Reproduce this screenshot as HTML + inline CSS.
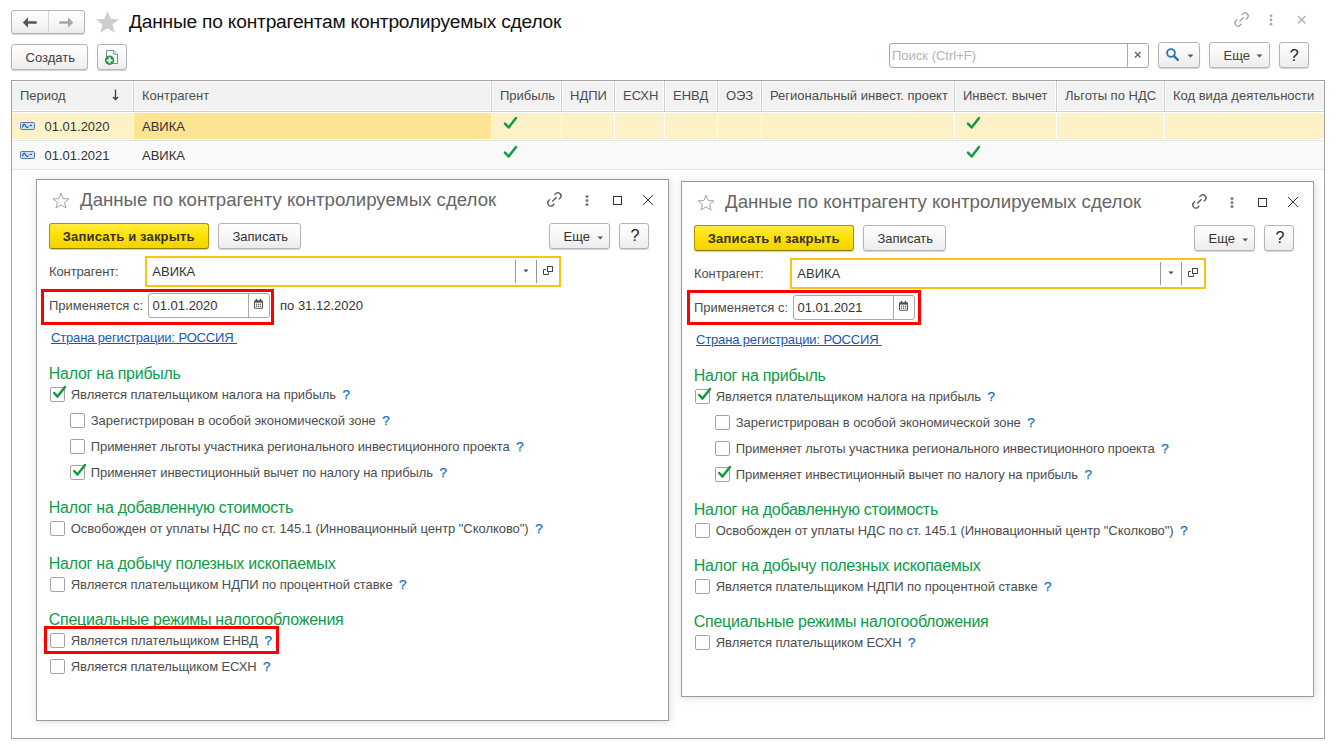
<!DOCTYPE html>
<html><head><meta charset="utf-8"><style>
html,body{margin:0;padding:0;background:#fff;width:1337px;height:750px;overflow:hidden;position:relative;font-family:"Liberation Sans", sans-serif;}
.t{position:absolute;white-space:nowrap;font-family:"Liberation Sans", sans-serif;}
.b{position:absolute;}
</style></head><body>
<div class="b" style="left:11px;top:10px;width:74px;height:24px;border:1px solid #b4b4b4;border-radius:3px;background:linear-gradient(#ffffff,#f7f7f7 50%,#ececec);box-shadow:0 1px 1px rgba(0,0,0,0.18);box-sizing:border-box;"></div>
<div class="b" style="left:48px;top:11px;width:1px;height:22px;background:#d6d6d6"></div>
<svg class="b" style="left:22px;top:17px" width="16" height="12" viewBox="0 0 16 12"><path d="M0.8 5.5 L6 0.2 L6 4.2 L14.7 4.2 L14.7 6.8 L6 6.8 L6 10.8 Z" fill="#555"/></svg>
<svg class="b" style="left:58px;top:17px" width="16" height="12" viewBox="0 0 16 12"><path d="M15.2 5.5 L10 0.2 L10 4.2 L1.3 4.2 L1.3 6.8 L10 6.8 L10 10.8 Z" fill="#a6a6a6"/></svg>
<svg class="b" style="left:95px;top:10px" width="26" height="24" viewBox="0 0 26 24"><path d="M12.5 1 L15.6 8.9 L24 9.3 L17.5 14.6 L19.7 22.8 L12.5 18.2 L5.3 22.8 L7.5 14.6 L1 9.3 L9.4 8.9 Z" fill="#cdcdcd"/></svg>
<div class="t" style="left:129px;top:10.20px;font-size:19.2px;line-height:24px;color:#111;letter-spacing:-0.22px;">Данные по контрагентам контролируемых сделок</div>
<svg class="b" style="left:1230px;top:8px" width="22" height="22" viewBox="0 0 22 22"><g transform="translate(8 15)" fill="none" stroke="#a3a3a3" stroke-width="1.3"><path d="M3.6 -7.98 L5.01 -9.39 A3.1 3.1 0 0 1 9.39 -5.01 L7.98 -3.6"/><path d="M-0.78 -3.6 L-2.19 -2.19 A3.1 3.1 0 0 0 2.19 2.19 L3.6 0.78"/><path d="M1.5 -1.5 L5.7 -5.7"/></g></svg>
<svg class="b" style="left:1268px;top:12px" width="6" height="16" viewBox="0 0 6 16"><g fill="#a8a8a8"><circle cx="3" cy="3.8" r="1.4"/><circle cx="3" cy="8" r="1.4"/><circle cx="3" cy="12.2" r="1.4"/></g></svg>
<svg class="b" style="left:1296px;top:14px" width="11" height="11" viewBox="0 0 11 11"><path d="M2 2 L9.5 9.5 M9.5 2 L2 9.5" stroke="#a8a8a8" stroke-width="1.1"/></svg>
<div class="b" style="left:11px;top:44px;width:77px;height:26px;border:1px solid #b4b4b4;border-radius:3px;background:linear-gradient(#ffffff,#f7f7f7 50%,#ececec);box-shadow:0 1px 1px rgba(0,0,0,0.18);box-sizing:border-box;"></div>
<div class="t" style="left:25.5px;top:49.50px;font-size:13px;line-height:16px;color:#404040;">Создать</div>
<div class="b" style="left:97px;top:44px;width:30px;height:26px;border:1px solid #b4b4b4;border-radius:3px;background:linear-gradient(#ffffff,#f7f7f7 50%,#ececec);box-shadow:0 1px 1px rgba(0,0,0,0.18);box-sizing:border-box;"></div>
<svg class="b" style="left:103px;top:48px" width="18" height="18" viewBox="0 0 18 18"><path d="M3.5 2.5 L10.8 2.5 L14.5 6.2 L14.5 15.5 L3.5 15.5 Z" fill="#fff" stroke="#7a8ba0" stroke-width="1"/><path d="M10.8 2.5 L10.8 6.2 L14.5 6.2" fill="#eef2f6" stroke="#7a8ba0"/><circle cx="6.6" cy="12.3" r="4.7" fill="#1f9b3c"/><path d="M6.6 9.3 V15.3 M3.6 12.3 H9.6" stroke="#fff" stroke-width="1.8"/></svg>
<div class="b" style="left:889px;top:43px;width:260px;height:25px;border:1px solid #a9a9a9;border-radius:3px;background:#fff;box-sizing:border-box;"></div>
<div class="b" style="left:1127px;top:44px;width:1px;height:23px;background:#a9a9a9"></div>
<div class="t" style="left:892px;top:47.50px;font-size:13px;line-height:16px;color:#b3b3b3;">Поиск (Ctrl+F)</div>
<svg class="b" style="left:1132px;top:49px" width="12" height="12" viewBox="0 0 12 12"><path d="M3 3 L8.5 8.5 M8.5 3 L3 8.5" stroke="#555" stroke-width="1.1"/></svg>
<div class="b" style="left:1158px;top:42px;width:42px;height:26px;border:1px solid #b4b4b4;border-radius:3px;background:linear-gradient(#ffffff,#f7f7f7 50%,#ececec);box-shadow:0 1px 1px rgba(0,0,0,0.18);box-sizing:border-box;"></div>
<svg class="b" style="left:1165px;top:47px" width="16" height="16" viewBox="0 0 16 16"><circle cx="6" cy="6" r="3.9" fill="none" stroke="#2b74bb" stroke-width="1.8"/><path d="M8.8 8.8 L12.8 12.8" stroke="#2b74bb" stroke-width="2.5" stroke-linecap="round"/></svg>
<svg class="b" style="left:1187px;top:54px" width="8" height="5" viewBox="0 0 8 5"><path d="M0.5 0.5 H6.5 L3.5 3.5 Z" fill="#555"/></svg>
<div class="b" style="left:1209px;top:42px;width:61px;height:26px;border:1px solid #b4b4b4;border-radius:3px;background:linear-gradient(#ffffff,#f7f7f7 50%,#ececec);box-shadow:0 1px 1px rgba(0,0,0,0.18);box-sizing:border-box;"></div>
<div class="t" style="left:1223.5px;top:47.50px;font-size:13px;line-height:16px;color:#404040;">Еще</div>
<svg class="b" style="left:1256px;top:54px" width="8" height="5" viewBox="0 0 8 5"><path d="M0.5 0.5 H6.5 L3.5 3.5 Z" fill="#555"/></svg>
<div class="b" style="left:1279px;top:42px;width:30px;height:26px;border:1px solid #b4b4b4;border-radius:3px;background:linear-gradient(#ffffff,#f7f7f7 50%,#ececec);box-shadow:0 1px 1px rgba(0,0,0,0.18);box-sizing:border-box;"></div>
<div class="t" style="left:1289.8px;top:45.50px;font-size:16px;line-height:20px;color:#222;">?</div>
<div class="b" style="left:11px;top:80px;width:1314px;height:659px;border:1px solid #a3a3a3;box-sizing:border-box;background:#fff;"></div>
<div class="b" style="left:12px;top:82px;width:1312px;height:28px;background:#f2f2f2;"></div>
<div class="b" style="left:12px;top:111px;width:1312px;height:1px;background:#cfcfcf;"></div>
<div class="b" style="left:133px;top:81px;width:1px;height:31px;background:#cdcdcd;"></div>
<div class="b" style="left:132px;top:82px;width:1px;height:28px;background:#fff;"></div>
<div class="b" style="left:134px;top:82px;width:1px;height:28px;background:#fff;"></div>
<div class="b" style="left:491px;top:81px;width:1px;height:31px;background:#cdcdcd;"></div>
<div class="b" style="left:490px;top:82px;width:1px;height:28px;background:#fff;"></div>
<div class="b" style="left:492px;top:82px;width:1px;height:28px;background:#fff;"></div>
<div class="b" style="left:561px;top:81px;width:1px;height:31px;background:#cdcdcd;"></div>
<div class="b" style="left:560px;top:82px;width:1px;height:28px;background:#fff;"></div>
<div class="b" style="left:562px;top:82px;width:1px;height:28px;background:#fff;"></div>
<div class="b" style="left:614px;top:81px;width:1px;height:31px;background:#cdcdcd;"></div>
<div class="b" style="left:613px;top:82px;width:1px;height:28px;background:#fff;"></div>
<div class="b" style="left:615px;top:82px;width:1px;height:28px;background:#fff;"></div>
<div class="b" style="left:664px;top:81px;width:1px;height:31px;background:#cdcdcd;"></div>
<div class="b" style="left:663px;top:82px;width:1px;height:28px;background:#fff;"></div>
<div class="b" style="left:665px;top:82px;width:1px;height:28px;background:#fff;"></div>
<div class="b" style="left:717px;top:81px;width:1px;height:31px;background:#cdcdcd;"></div>
<div class="b" style="left:716px;top:82px;width:1px;height:28px;background:#fff;"></div>
<div class="b" style="left:718px;top:82px;width:1px;height:28px;background:#fff;"></div>
<div class="b" style="left:761px;top:81px;width:1px;height:31px;background:#cdcdcd;"></div>
<div class="b" style="left:760px;top:82px;width:1px;height:28px;background:#fff;"></div>
<div class="b" style="left:762px;top:82px;width:1px;height:28px;background:#fff;"></div>
<div class="b" style="left:954px;top:81px;width:1px;height:31px;background:#cdcdcd;"></div>
<div class="b" style="left:953px;top:82px;width:1px;height:28px;background:#fff;"></div>
<div class="b" style="left:955px;top:82px;width:1px;height:28px;background:#fff;"></div>
<div class="b" style="left:1056px;top:81px;width:1px;height:31px;background:#cdcdcd;"></div>
<div class="b" style="left:1055px;top:82px;width:1px;height:28px;background:#fff;"></div>
<div class="b" style="left:1057px;top:82px;width:1px;height:28px;background:#fff;"></div>
<div class="b" style="left:1164px;top:81px;width:1px;height:31px;background:#cdcdcd;"></div>
<div class="b" style="left:1163px;top:82px;width:1px;height:28px;background:#fff;"></div>
<div class="b" style="left:1165px;top:82px;width:1px;height:28px;background:#fff;"></div>
<div class="b" style="left:12px;top:113px;width:1312px;height:26px;background:#fdf2c7;"></div>
<div class="b" style="left:134px;top:113px;width:357px;height:26px;background:#fce492;"></div>
<div class="b" style="left:133px;top:113px;width:1px;height:26px;background:#fff;"></div>
<div class="b" style="left:491px;top:113px;width:1px;height:26px;background:#fff;"></div>
<div class="b" style="left:561px;top:113px;width:1px;height:26px;background:#fff;"></div>
<div class="b" style="left:614px;top:113px;width:1px;height:26px;background:#fff;"></div>
<div class="b" style="left:664px;top:113px;width:1px;height:26px;background:#fff;"></div>
<div class="b" style="left:717px;top:113px;width:1px;height:26px;background:#fff;"></div>
<div class="b" style="left:761px;top:113px;width:1px;height:26px;background:#fff;"></div>
<div class="b" style="left:954px;top:113px;width:1px;height:26px;background:#fff;"></div>
<div class="b" style="left:1056px;top:113px;width:1px;height:26px;background:#fff;"></div>
<div class="b" style="left:1164px;top:113px;width:1px;height:26px;background:#fff;"></div>
<div class="b" style="left:12px;top:140px;width:1312px;height:1px;background:#e3e3e3;"></div>
<div class="b" style="left:12px;top:141px;width:1312px;height:28px;background:#f9f9f9;"></div>
<div class="b" style="left:12px;top:169px;width:1312px;height:1px;background:#e3e3e3;"></div>
<div class="t" style="left:20px;top:87.50px;font-size:13px;line-height:16px;color:#4d4d4d;">Период</div>
<div class="t" style="left:142px;top:87.50px;font-size:13px;line-height:16px;color:#4d4d4d;">Контрагент</div>
<div class="t" style="left:500px;top:87.50px;font-size:13px;line-height:16px;color:#4d4d4d;">Прибыль</div>
<div class="t" style="left:570px;top:87.50px;font-size:13px;line-height:16px;color:#4d4d4d;">НДПИ</div>
<div class="t" style="left:623px;top:87.50px;font-size:13px;line-height:16px;color:#4d4d4d;">ЕСХН</div>
<div class="t" style="left:673px;top:87.50px;font-size:13px;line-height:16px;color:#4d4d4d;">ЕНВД</div>
<div class="t" style="left:726px;top:87.50px;font-size:13px;line-height:16px;color:#4d4d4d;">ОЭЗ</div>
<div class="t" style="left:770px;top:87.50px;font-size:13px;line-height:16px;color:#4d4d4d;">Региональный инвест. проект</div>
<div class="t" style="left:963px;top:87.50px;font-size:13px;line-height:16px;color:#4d4d4d;">Инвест. вычет</div>
<div class="t" style="left:1065px;top:87.50px;font-size:13px;line-height:16px;color:#4d4d4d;">Льготы по НДС</div>
<div class="t" style="left:1173px;top:87.50px;font-size:13px;line-height:16px;color:#4d4d4d;">Код вида деятельности</div>
<svg class="b" style="left:110px;top:88px" width="11" height="14" viewBox="0 0 11 14"><path d="M5.5 1.6 V11" fill="none" stroke="#404040" stroke-width="1.3"/><path d="M3 9 L5.5 11.5 L8 9" fill="none" stroke="#404040" stroke-width="1.5"/></svg>
<svg class="b" style="left:20px;top:122px" width="15" height="8" viewBox="0 0 15 8"><rect x="0.5" y="0.5" width="14" height="7" rx="1.2" fill="#c9e0f5" stroke="#5d7b9f"/><path d="M2.4 5.4 Q3.6 1.4 4.6 2.3 Q5.5 3.2 6.3 5 Q7.3 6.1 8.7 4.5" fill="none" stroke="#1d4f8c" stroke-width="1.1"/><path d="M9.7 3.5 L11.8 3.4" stroke="#1d4f8c" stroke-width="1.1"/></svg>
<div class="t" style="left:44.5px;top:118.50px;font-size:13px;line-height:16px;color:#333;">01.01.2020</div>
<div class="t" style="left:142px;top:118.50px;font-size:13px;line-height:16px;color:#333;">АВИКА</div>
<svg class="b" style="left:502px;top:116px" width="16" height="14" viewBox="0 0 16 14"><path d="M3 7.6 L6.6 11.5 L14 2.1" fill="none" stroke="#129a42" stroke-width="2.5" stroke-linecap="round" stroke-linejoin="round"/></svg>
<svg class="b" style="left:965px;top:116px" width="16" height="14" viewBox="0 0 16 14"><path d="M3 7.6 L6.6 11.5 L14 2.1" fill="none" stroke="#129a42" stroke-width="2.5" stroke-linecap="round" stroke-linejoin="round"/></svg>
<svg class="b" style="left:20px;top:151px" width="15" height="8" viewBox="0 0 15 8"><rect x="0.5" y="0.5" width="14" height="7" rx="1.2" fill="#c9e0f5" stroke="#5d7b9f"/><path d="M2.4 5.4 Q3.6 1.4 4.6 2.3 Q5.5 3.2 6.3 5 Q7.3 6.1 8.7 4.5" fill="none" stroke="#1d4f8c" stroke-width="1.1"/><path d="M9.7 3.5 L11.8 3.4" stroke="#1d4f8c" stroke-width="1.1"/></svg>
<div class="t" style="left:44.5px;top:147.50px;font-size:13px;line-height:16px;color:#333;">01.01.2021</div>
<div class="t" style="left:142px;top:147.50px;font-size:13px;line-height:16px;color:#333;">АВИКА</div>
<svg class="b" style="left:502px;top:145px" width="16" height="14" viewBox="0 0 16 14"><path d="M3 7.6 L6.6 11.5 L14 2.1" fill="none" stroke="#129a42" stroke-width="2.5" stroke-linecap="round" stroke-linejoin="round"/></svg>
<svg class="b" style="left:965px;top:145px" width="16" height="14" viewBox="0 0 16 14"><path d="M3 7.6 L6.6 11.5 L14 2.1" fill="none" stroke="#129a42" stroke-width="2.5" stroke-linecap="round" stroke-linejoin="round"/></svg>
<div class="b" style="left:36px;top:179px;width:633px;height:542px;border:1px solid #9a9a9a;box-sizing:border-box;background:#fff;box-shadow:1px 1px 8px rgba(0,0,0,0.15);"></div>
<svg class="b" style="left:52px;top:192px" width="18" height="17" viewBox="0 0 18 17"><path d="M9 1.2 L11.2 6.6 L16.9 6.9 L12.5 10.5 L14 16 L9 12.9 L4 16 L5.5 10.5 L1.1 6.9 L6.8 6.6 Z" fill="none" stroke="#9aa3ab" stroke-width="1"/></svg>
<div class="t" style="left:80px;top:188.00px;font-size:18.67px;line-height:24px;color:#666;">Данные по контрагенту контролируемых сделок</div>
<svg class="b" style="left:544px;top:189px" width="22" height="22" viewBox="0 0 22 22"><g transform="translate(6.8 14)" fill="none" stroke="#555" stroke-width="1.3"><path d="M3.6 -7.98 L5.01 -9.39 A3.1 3.1 0 0 1 9.39 -5.01 L7.98 -3.6"/><path d="M-0.78 -3.6 L-2.19 -2.19 A3.1 3.1 0 0 0 2.19 2.19 L3.6 0.78"/><path d="M1.5 -1.5 L5.7 -5.7"/></g></svg>
<svg class="b" style="left:583.5px;top:194px" width="6" height="14" viewBox="0 0 6 14"><g fill="#7a7a7a"><circle cx="3" cy="2.6" r="1.5"/><circle cx="3" cy="6.6" r="1.5"/><circle cx="3" cy="10.6" r="1.5"/></g></svg>
<div class="b" style="left:613px;top:196px;width:9px;height:9px;border:1.5px solid #333;box-sizing:border-box;"></div>
<svg class="b" style="left:641px;top:193px" width="14" height="14" viewBox="0 0 14 14"><path d="M2 2 L12 12 M12 2 L2 12" stroke="#3a3a3a" stroke-width="1"/></svg>
<div class="b" style="left:49px;top:223px;width:160px;height:26px;border:1px solid #ab9400;border-bottom-color:#8f7d00;border-radius:3px;background:linear-gradient(#ffec40,#ffe000 50%,#f3d300);box-shadow:0 1px 1px rgba(0,0,0,0.2);box-sizing:border-box;"></div>
<div class="t" style="left:62.8px;top:228.50px;font-size:13px;line-height:16px;color:#333;font-weight:700;letter-spacing:0.17px;">Записать и закрыть</div>
<div class="b" style="left:218px;top:223px;width:83px;height:26px;border:1px solid #b4b4b4;border-radius:3px;background:linear-gradient(#ffffff,#f7f7f7 50%,#ececec);box-shadow:0 1px 1px rgba(0,0,0,0.18);box-sizing:border-box;"></div>
<div class="t" style="left:232.5px;top:228.50px;font-size:13px;line-height:16px;color:#333;">Записать</div>
<div class="b" style="left:549px;top:223px;width:61px;height:26px;border:1px solid #b4b4b4;border-radius:3px;background:linear-gradient(#ffffff,#f7f7f7 50%,#ececec);box-shadow:0 1px 1px rgba(0,0,0,0.18);box-sizing:border-box;"></div>
<div class="t" style="left:563.5px;top:228.50px;font-size:13px;line-height:16px;color:#333;">Еще</div>
<svg class="b" style="left:597px;top:235.5px" width="7" height="4" viewBox="0 0 7 4"><path d="M0.5 0.5 H6 L3.25 3.5 Z" fill="#555"/></svg>
<div class="b" style="left:619px;top:223px;width:30px;height:26px;border:1px solid #b4b4b4;border-radius:3px;background:linear-gradient(#ffffff,#f7f7f7 50%,#ececec);box-shadow:0 1px 1px rgba(0,0,0,0.18);box-sizing:border-box;"></div>
<div class="t" style="left:630.5px;top:225.50px;font-size:16px;line-height:20px;color:#222;">?</div>
<div class="t" style="left:49px;top:263.80px;font-size:13px;line-height:16px;color:#4d4d4d;letter-spacing:-0.11px;">Контрагент:</div>
<div class="b" style="left:145px;top:256px;width:416px;height:31px;border:2px solid #f7c40f;box-sizing:border-box;background:#fff;"></div>
<div class="t" style="left:152.3px;top:263.50px;font-size:13px;line-height:16px;color:#333;">АВИКА</div>
<div class="b" style="left:515px;top:260px;width:1px;height:23px;background:#999"></div>
<div class="b" style="left:536px;top:260px;width:1px;height:23px;background:#999"></div>
<svg class="b" style="left:522.5px;top:268.5px" width="6" height="4" viewBox="0 0 6 4"><path d="M0.5 0.5 H5.5 L3 3.3 Z" fill="#444"/></svg>
<svg class="b" style="left:542px;top:265px" width="12" height="12" viewBox="0 0 12 12"><g fill="none" stroke="#444" stroke-width="1"><rect x="5.5" y="1.5" width="5" height="5"/><path d="M4 4.5 H1.5 V9.5 H6.5 V7.5"/></g></svg>
<div class="t" style="left:49px;top:297.50px;font-size:13px;line-height:16px;color:#4d4d4d;">Применяется с:</div>
<div class="b" style="left:148px;top:293px;width:122px;height:25px;border:1px solid #a9a9a9;border-radius:3px;box-sizing:border-box;background:#fff;"></div>
<div class="b" style="left:248px;top:294px;width:1px;height:23px;background:#a9a9a9"></div>
<div class="t" style="left:152.5px;top:297.50px;font-size:13px;line-height:16px;color:#333;">01.01.2020</div>
<svg class="b" style="left:253px;top:298px" width="12" height="12" viewBox="0 0 12 12"><rect x="1" y="2.2" width="9" height="8.6" rx="1.2" fill="#505050"/><rect x="2" y="4.6" width="7" height="5.2" fill="#fff"/><g fill="#505050"><circle cx="3.5" cy="6.2" r="0.7"/><circle cx="5.5" cy="6.2" r="0.7"/><circle cx="7.5" cy="6.2" r="0.7"/><circle cx="3.5" cy="8.3" r="0.7"/><circle cx="5.5" cy="8.3" r="0.7"/><circle cx="7.5" cy="8.3" r="0.7"/><rect x="2.9" y="0.8" width="1.2" height="2.4" rx="0.5"/><rect x="6.9" y="0.8" width="1.2" height="2.4" rx="0.5"/></g></svg>
<div class="t" style="left:280px;top:297.50px;font-size:13px;line-height:16px;color:#333;">по 31.12.2020</div>
<div class="b" style="left:41px;top:289px;width:233px;height:36px;border:3px solid #ff0000;box-sizing:border-box;"></div>
<div class="t" style="left:51px;top:329.50px;font-size:13px;line-height:16px;color:#2155b5;letter-spacing:-0.15px;"><span style="text-decoration:underline">Страна регистрации: РОССИЯ&nbsp;</span></div>
<div class="t" style="left:48.8px;top:363.50px;font-size:16px;line-height:20px;color:#0f9b48;letter-spacing:-0.27px;">Налог на прибыль</div>
<div class="b" style="left:50px;top:387px;width:15px;height:15px;border:1px solid #a3a3a3;border-radius:2px;box-sizing:border-box;background:#fff;"></div>
<svg class="b" style="left:51px;top:384px" width="16" height="16" viewBox="0 0 16 16"><path d="M3.2 9 L6.5 12.6 L14 3.1" fill="none" stroke="#129a42" stroke-width="2.5" stroke-linecap="round" stroke-linejoin="round"/></svg>
<div class="t" style="left:70.8px;top:386.50px;font-size:13px;line-height:16px;color:#4d4d4d;letter-spacing:-0.07px;">Является плательщиком налога на прибыль<span style="color:#1670c0;margin-left:6.5px;letter-spacing:0;font-size:13.5px;line-height:0;-webkit-text-stroke:0.25px #1670c0">?</span></div>
<div class="b" style="left:70px;top:413px;width:15px;height:15px;border:1px solid #a3a3a3;border-radius:2px;box-sizing:border-box;background:#fff;"></div>
<div class="t" style="left:90.8px;top:412.50px;font-size:13px;line-height:16px;color:#4d4d4d;letter-spacing:-0.05px;">Зарегистрирован в особой экономической зоне<span style="color:#1670c0;margin-left:6.5px;letter-spacing:0;font-size:13.5px;line-height:0;-webkit-text-stroke:0.25px #1670c0">?</span></div>
<div class="b" style="left:70px;top:439px;width:15px;height:15px;border:1px solid #a3a3a3;border-radius:2px;box-sizing:border-box;background:#fff;"></div>
<div class="t" style="left:90.8px;top:438.50px;font-size:13px;line-height:16px;color:#4d4d4d;letter-spacing:-0.115px;">Применяет льготы участника регионального инвестиционного проекта<span style="color:#1670c0;margin-left:6.5px;letter-spacing:0;font-size:13.5px;line-height:0;-webkit-text-stroke:0.25px #1670c0">?</span></div>
<div class="b" style="left:70px;top:465px;width:15px;height:15px;border:1px solid #a3a3a3;border-radius:2px;box-sizing:border-box;background:#fff;"></div>
<svg class="b" style="left:71px;top:462px" width="16" height="16" viewBox="0 0 16 16"><path d="M3.2 9 L6.5 12.6 L14 3.1" fill="none" stroke="#129a42" stroke-width="2.5" stroke-linecap="round" stroke-linejoin="round"/></svg>
<div class="t" style="left:90.8px;top:464.50px;font-size:13px;line-height:16px;color:#4d4d4d;letter-spacing:-0.105px;">Применяет инвестиционный вычет по налогу на прибыль<span style="color:#1670c0;margin-left:6.5px;letter-spacing:0;font-size:13.5px;line-height:0;-webkit-text-stroke:0.25px #1670c0">?</span></div>
<div class="t" style="left:48.8px;top:497.50px;font-size:16px;line-height:20px;color:#0f9b48;letter-spacing:-0.27px;">Налог на добавленную стоимость</div>
<div class="b" style="left:50px;top:521px;width:15px;height:15px;border:1px solid #a3a3a3;border-radius:2px;box-sizing:border-box;background:#fff;"></div>
<div class="t" style="left:70.8px;top:520.50px;font-size:13px;line-height:16px;color:#4d4d4d;letter-spacing:-0.045px;">Освобожден от уплаты НДС по ст. 145.1 (Инновационный центр "Сколково")<span style="color:#1670c0;margin-left:6.5px;letter-spacing:0;font-size:13.5px;line-height:0;-webkit-text-stroke:0.25px #1670c0">?</span></div>
<div class="t" style="left:48.8px;top:553.50px;font-size:16px;line-height:20px;color:#0f9b48;letter-spacing:-0.27px;">Налог на добычу полезных ископаемых</div>
<div class="b" style="left:50px;top:577px;width:15px;height:15px;border:1px solid #a3a3a3;border-radius:2px;box-sizing:border-box;background:#fff;"></div>
<div class="t" style="left:70.8px;top:576.50px;font-size:13px;line-height:16px;color:#4d4d4d;letter-spacing:-0.065px;">Является плательщиком НДПИ по процентной ставке<span style="color:#1670c0;margin-left:6.5px;letter-spacing:0;font-size:13.5px;line-height:0;-webkit-text-stroke:0.25px #1670c0">?</span></div>
<div class="t" style="left:48.8px;top:609.50px;font-size:16px;line-height:20px;color:#0f9b48;letter-spacing:-0.27px;">Специальные режимы налогообложения</div>
<div class="b" style="left:50px;top:633px;width:15px;height:15px;border:1px solid #a3a3a3;border-radius:2px;box-sizing:border-box;background:#fff;"></div>
<div class="t" style="left:70.8px;top:632.50px;font-size:13px;line-height:16px;color:#4d4d4d;letter-spacing:-0.02px;">Является плательщиком ЕНВД<span style="color:#1670c0;margin-left:6.5px;letter-spacing:0;font-size:13.5px;line-height:0;-webkit-text-stroke:0.25px #1670c0">?</span></div>
<div class="b" style="left:44px;top:626px;width:235px;height:28px;border:3px solid #ff0000;box-sizing:border-box;"></div>
<div class="b" style="left:50px;top:659px;width:15px;height:15px;border:1px solid #a3a3a3;border-radius:2px;box-sizing:border-box;background:#fff;"></div>
<div class="t" style="left:70.8px;top:658.50px;font-size:13px;line-height:16px;color:#4d4d4d;letter-spacing:-0.08px;">Является плательщиком ЕСХН<span style="color:#1670c0;margin-left:6.5px;letter-spacing:0;font-size:13.5px;line-height:0;-webkit-text-stroke:0.25px #1670c0">?</span></div>
<div class="b" style="left:681px;top:181px;width:633px;height:516px;border:1px solid #9a9a9a;box-sizing:border-box;background:#fff;box-shadow:1px 1px 8px rgba(0,0,0,0.15);"></div>
<svg class="b" style="left:697px;top:194px" width="18" height="17" viewBox="0 0 18 17"><path d="M9 1.2 L11.2 6.6 L16.9 6.9 L12.5 10.5 L14 16 L9 12.9 L4 16 L5.5 10.5 L1.1 6.9 L6.8 6.6 Z" fill="none" stroke="#9aa3ab" stroke-width="1"/></svg>
<div class="t" style="left:725px;top:190.00px;font-size:18.67px;line-height:24px;color:#666;">Данные по контрагенту контролируемых сделок</div>
<svg class="b" style="left:1189px;top:191px" width="22" height="22" viewBox="0 0 22 22"><g transform="translate(6.8 14)" fill="none" stroke="#555" stroke-width="1.3"><path d="M3.6 -7.98 L5.01 -9.39 A3.1 3.1 0 0 1 9.39 -5.01 L7.98 -3.6"/><path d="M-0.78 -3.6 L-2.19 -2.19 A3.1 3.1 0 0 0 2.19 2.19 L3.6 0.78"/><path d="M1.5 -1.5 L5.7 -5.7"/></g></svg>
<svg class="b" style="left:1228.5px;top:196px" width="6" height="14" viewBox="0 0 6 14"><g fill="#7a7a7a"><circle cx="3" cy="2.6" r="1.5"/><circle cx="3" cy="6.6" r="1.5"/><circle cx="3" cy="10.6" r="1.5"/></g></svg>
<div class="b" style="left:1258px;top:198px;width:9px;height:9px;border:1.5px solid #333;box-sizing:border-box;"></div>
<svg class="b" style="left:1286px;top:195px" width="14" height="14" viewBox="0 0 14 14"><path d="M2 2 L12 12 M12 2 L2 12" stroke="#3a3a3a" stroke-width="1"/></svg>
<div class="b" style="left:694px;top:225px;width:160px;height:26px;border:1px solid #ab9400;border-bottom-color:#8f7d00;border-radius:3px;background:linear-gradient(#ffec40,#ffe000 50%,#f3d300);box-shadow:0 1px 1px rgba(0,0,0,0.2);box-sizing:border-box;"></div>
<div class="t" style="left:707.8px;top:230.50px;font-size:13px;line-height:16px;color:#333;font-weight:700;letter-spacing:0.17px;">Записать и закрыть</div>
<div class="b" style="left:863px;top:225px;width:83px;height:26px;border:1px solid #b4b4b4;border-radius:3px;background:linear-gradient(#ffffff,#f7f7f7 50%,#ececec);box-shadow:0 1px 1px rgba(0,0,0,0.18);box-sizing:border-box;"></div>
<div class="t" style="left:877.5px;top:230.50px;font-size:13px;line-height:16px;color:#333;">Записать</div>
<div class="b" style="left:1194px;top:225px;width:61px;height:26px;border:1px solid #b4b4b4;border-radius:3px;background:linear-gradient(#ffffff,#f7f7f7 50%,#ececec);box-shadow:0 1px 1px rgba(0,0,0,0.18);box-sizing:border-box;"></div>
<div class="t" style="left:1208.5px;top:230.50px;font-size:13px;line-height:16px;color:#333;">Еще</div>
<svg class="b" style="left:1242px;top:237.5px" width="7" height="4" viewBox="0 0 7 4"><path d="M0.5 0.5 H6 L3.25 3.5 Z" fill="#555"/></svg>
<div class="b" style="left:1264px;top:225px;width:30px;height:26px;border:1px solid #b4b4b4;border-radius:3px;background:linear-gradient(#ffffff,#f7f7f7 50%,#ececec);box-shadow:0 1px 1px rgba(0,0,0,0.18);box-sizing:border-box;"></div>
<div class="t" style="left:1275.5px;top:227.50px;font-size:16px;line-height:20px;color:#222;">?</div>
<div class="t" style="left:694px;top:265.80px;font-size:13px;line-height:16px;color:#4d4d4d;letter-spacing:-0.11px;">Контрагент:</div>
<div class="b" style="left:790px;top:258px;width:416px;height:31px;border:2px solid #f7c40f;box-sizing:border-box;background:#fff;"></div>
<div class="t" style="left:797.3px;top:265.50px;font-size:13px;line-height:16px;color:#333;">АВИКА</div>
<div class="b" style="left:1160px;top:262px;width:1px;height:23px;background:#999"></div>
<div class="b" style="left:1181px;top:262px;width:1px;height:23px;background:#999"></div>
<svg class="b" style="left:1167.5px;top:270.5px" width="6" height="4" viewBox="0 0 6 4"><path d="M0.5 0.5 H5.5 L3 3.3 Z" fill="#444"/></svg>
<svg class="b" style="left:1187px;top:267px" width="12" height="12" viewBox="0 0 12 12"><g fill="none" stroke="#444" stroke-width="1"><rect x="5.5" y="1.5" width="5" height="5"/><path d="M4 4.5 H1.5 V9.5 H6.5 V7.5"/></g></svg>
<div class="t" style="left:694px;top:299.50px;font-size:13px;line-height:16px;color:#4d4d4d;">Применяется с:</div>
<div class="b" style="left:793px;top:295px;width:122px;height:25px;border:1px solid #a9a9a9;border-radius:3px;box-sizing:border-box;background:#fff;"></div>
<div class="b" style="left:893px;top:296px;width:1px;height:23px;background:#a9a9a9"></div>
<div class="t" style="left:797.5px;top:299.50px;font-size:13px;line-height:16px;color:#333;">01.01.2021</div>
<svg class="b" style="left:898px;top:300px" width="12" height="12" viewBox="0 0 12 12"><rect x="1" y="2.2" width="9" height="8.6" rx="1.2" fill="#505050"/><rect x="2" y="4.6" width="7" height="5.2" fill="#fff"/><g fill="#505050"><circle cx="3.5" cy="6.2" r="0.7"/><circle cx="5.5" cy="6.2" r="0.7"/><circle cx="7.5" cy="6.2" r="0.7"/><circle cx="3.5" cy="8.3" r="0.7"/><circle cx="5.5" cy="8.3" r="0.7"/><circle cx="7.5" cy="8.3" r="0.7"/><rect x="2.9" y="0.8" width="1.2" height="2.4" rx="0.5"/><rect x="6.9" y="0.8" width="1.2" height="2.4" rx="0.5"/></g></svg>
<div class="b" style="left:687px;top:290px;width:234px;height:35px;border:3px solid #ff0000;box-sizing:border-box;"></div>
<div class="t" style="left:696px;top:331.50px;font-size:13px;line-height:16px;color:#2155b5;letter-spacing:-0.15px;"><span style="text-decoration:underline">Страна регистрации: РОССИЯ&nbsp;</span></div>
<div class="t" style="left:693.8px;top:365.50px;font-size:16px;line-height:20px;color:#0f9b48;letter-spacing:-0.27px;">Налог на прибыль</div>
<div class="b" style="left:695px;top:389px;width:15px;height:15px;border:1px solid #a3a3a3;border-radius:2px;box-sizing:border-box;background:#fff;"></div>
<svg class="b" style="left:696px;top:386px" width="16" height="16" viewBox="0 0 16 16"><path d="M3.2 9 L6.5 12.6 L14 3.1" fill="none" stroke="#129a42" stroke-width="2.5" stroke-linecap="round" stroke-linejoin="round"/></svg>
<div class="t" style="left:715.8px;top:388.50px;font-size:13px;line-height:16px;color:#4d4d4d;letter-spacing:-0.07px;">Является плательщиком налога на прибыль<span style="color:#1670c0;margin-left:6.5px;letter-spacing:0;font-size:13.5px;line-height:0;-webkit-text-stroke:0.25px #1670c0">?</span></div>
<div class="b" style="left:715px;top:415px;width:15px;height:15px;border:1px solid #a3a3a3;border-radius:2px;box-sizing:border-box;background:#fff;"></div>
<div class="t" style="left:735.8px;top:414.50px;font-size:13px;line-height:16px;color:#4d4d4d;letter-spacing:-0.05px;">Зарегистрирован в особой экономической зоне<span style="color:#1670c0;margin-left:6.5px;letter-spacing:0;font-size:13.5px;line-height:0;-webkit-text-stroke:0.25px #1670c0">?</span></div>
<div class="b" style="left:715px;top:441px;width:15px;height:15px;border:1px solid #a3a3a3;border-radius:2px;box-sizing:border-box;background:#fff;"></div>
<div class="t" style="left:735.8px;top:440.50px;font-size:13px;line-height:16px;color:#4d4d4d;letter-spacing:-0.115px;">Применяет льготы участника регионального инвестиционного проекта<span style="color:#1670c0;margin-left:6.5px;letter-spacing:0;font-size:13.5px;line-height:0;-webkit-text-stroke:0.25px #1670c0">?</span></div>
<div class="b" style="left:715px;top:467px;width:15px;height:15px;border:1px solid #a3a3a3;border-radius:2px;box-sizing:border-box;background:#fff;"></div>
<svg class="b" style="left:716px;top:464px" width="16" height="16" viewBox="0 0 16 16"><path d="M3.2 9 L6.5 12.6 L14 3.1" fill="none" stroke="#129a42" stroke-width="2.5" stroke-linecap="round" stroke-linejoin="round"/></svg>
<div class="t" style="left:735.8px;top:466.50px;font-size:13px;line-height:16px;color:#4d4d4d;letter-spacing:-0.105px;">Применяет инвестиционный вычет по налогу на прибыль<span style="color:#1670c0;margin-left:6.5px;letter-spacing:0;font-size:13.5px;line-height:0;-webkit-text-stroke:0.25px #1670c0">?</span></div>
<div class="t" style="left:693.8px;top:499.50px;font-size:16px;line-height:20px;color:#0f9b48;letter-spacing:-0.27px;">Налог на добавленную стоимость</div>
<div class="b" style="left:695px;top:523px;width:15px;height:15px;border:1px solid #a3a3a3;border-radius:2px;box-sizing:border-box;background:#fff;"></div>
<div class="t" style="left:715.8px;top:522.50px;font-size:13px;line-height:16px;color:#4d4d4d;letter-spacing:-0.045px;">Освобожден от уплаты НДС по ст. 145.1 (Инновационный центр "Сколково")<span style="color:#1670c0;margin-left:6.5px;letter-spacing:0;font-size:13.5px;line-height:0;-webkit-text-stroke:0.25px #1670c0">?</span></div>
<div class="t" style="left:693.8px;top:555.50px;font-size:16px;line-height:20px;color:#0f9b48;letter-spacing:-0.27px;">Налог на добычу полезных ископаемых</div>
<div class="b" style="left:695px;top:579px;width:15px;height:15px;border:1px solid #a3a3a3;border-radius:2px;box-sizing:border-box;background:#fff;"></div>
<div class="t" style="left:715.8px;top:578.50px;font-size:13px;line-height:16px;color:#4d4d4d;letter-spacing:-0.065px;">Является плательщиком НДПИ по процентной ставке<span style="color:#1670c0;margin-left:6.5px;letter-spacing:0;font-size:13.5px;line-height:0;-webkit-text-stroke:0.25px #1670c0">?</span></div>
<div class="t" style="left:693.8px;top:611.50px;font-size:16px;line-height:20px;color:#0f9b48;letter-spacing:-0.27px;">Специальные режимы налогообложения</div>
<div class="b" style="left:695px;top:635px;width:15px;height:15px;border:1px solid #a3a3a3;border-radius:2px;box-sizing:border-box;background:#fff;"></div>
<div class="t" style="left:715.8px;top:634.50px;font-size:13px;line-height:16px;color:#4d4d4d;letter-spacing:-0.08px;">Является плательщиком ЕСХН<span style="color:#1670c0;margin-left:6.5px;letter-spacing:0;font-size:13.5px;line-height:0;-webkit-text-stroke:0.25px #1670c0">?</span></div>
</body></html>
